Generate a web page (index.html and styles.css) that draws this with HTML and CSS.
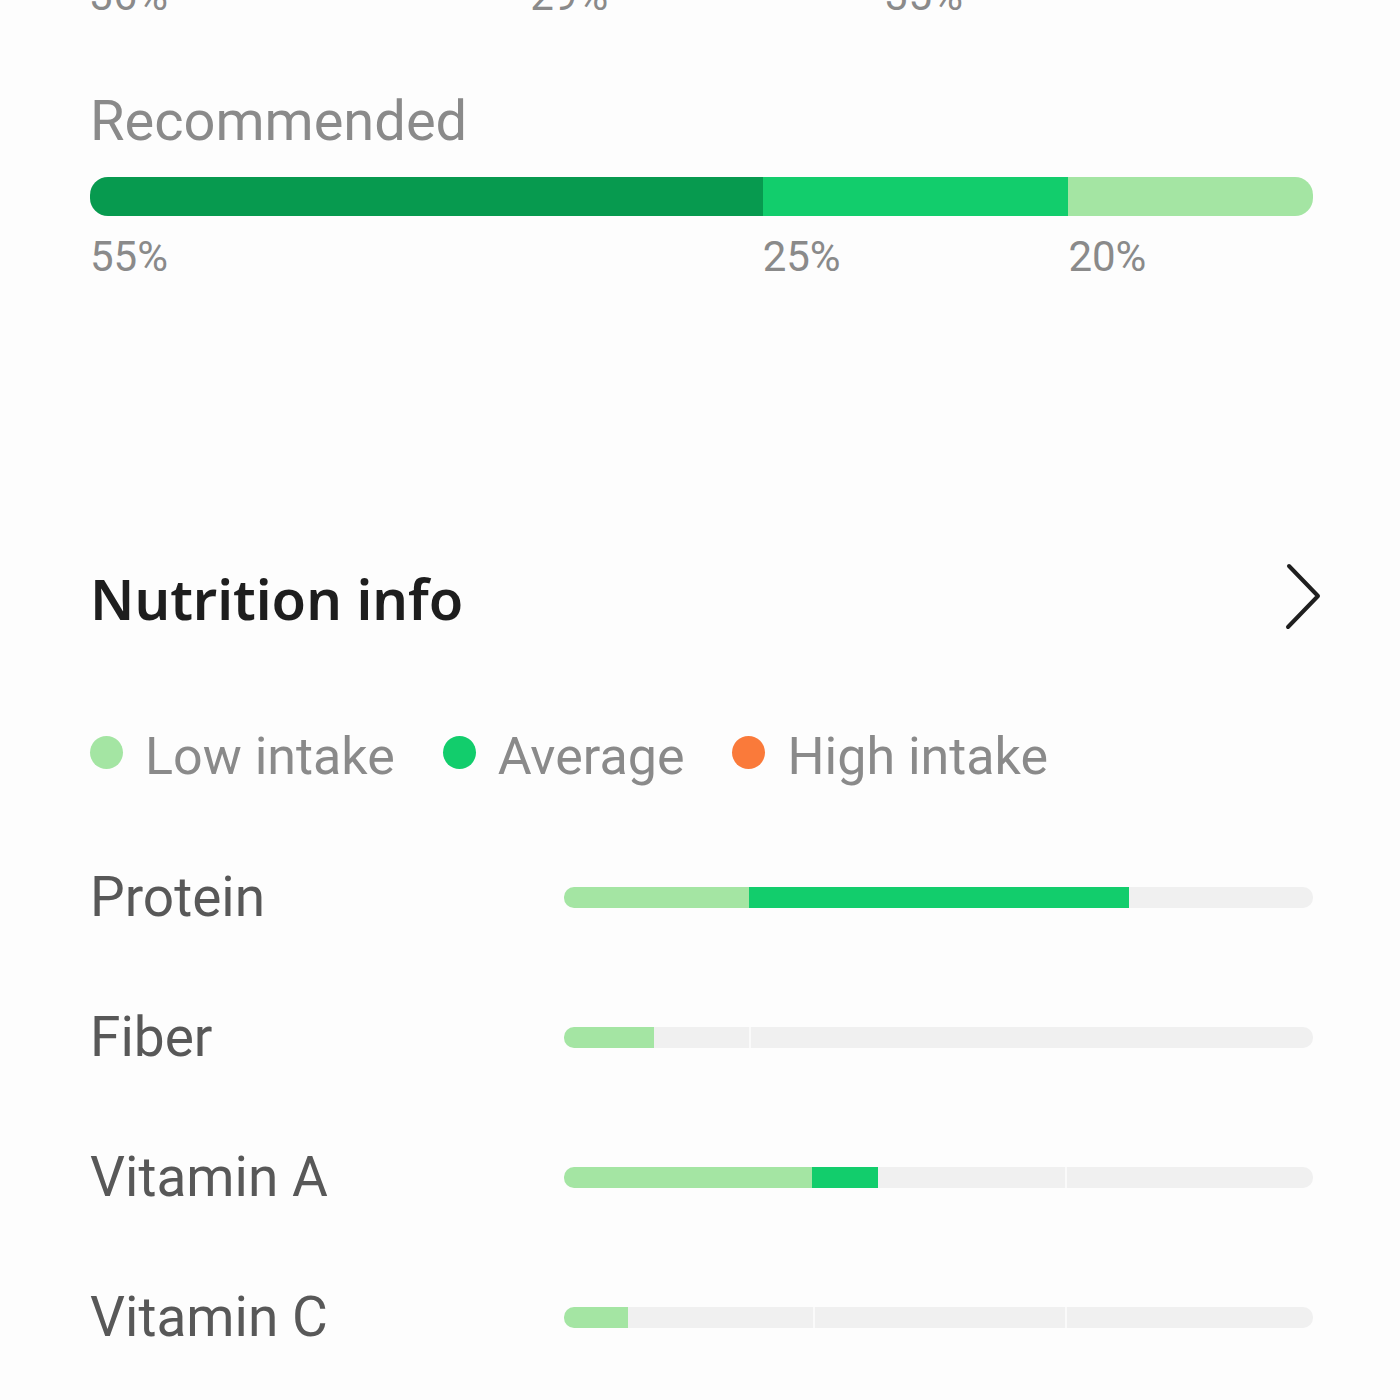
FILE: index.html
```html
<!DOCTYPE html>
<html lang="en">
<head>
    <meta charset="UTF-8">
    <meta name="viewport" content="width=device-width, initial-scale=1.0">
    <title>Nutrition</title>
    <link rel="stylesheet" href="styles.css">
</head>
<body>
    <div class="page">
        <!-- current split, bar scrolled out of view -->
        <div class="split-labels split-labels-top">
            <span style="width: 36%">36%</span>
            <span style="width: 29%">29%</span>
            <span style="width: 35%">35%</span>
        </div>

        <div class="split-title">Recommended</div>
        <div class="split-bar">
            <div class="seg seg-dark" style="width: 55%"></div>
            <div class="seg seg-mid" style="width: 25%"></div>
            <div class="seg seg-light" style="width: 20%"></div>
        </div>
        <div class="split-labels">
            <span style="width: 55%">55%</span>
            <span style="width: 25%">25%</span>
            <span style="width: 20%">20%</span>
        </div>

        <div class="section-header">
            <h2>Nutrition info</h2>
            <svg class="chevron" width="45" height="75" viewBox="0 0 45 75">
                <polyline points="9,6 38,36 8,67" fill="none" stroke="#1f1f1f" stroke-width="4" stroke-linecap="round" stroke-linejoin="round"/>
            </svg>
        </div>

        <div class="legend">
            <div class="legend-item"><span class="dot dot-low"></span>Low intake</div>
            <div class="legend-item"><span class="dot dot-avg"></span>Average</div>
            <div class="legend-item"><span class="dot dot-high"></span>High intake</div>
        </div>

        <div class="nutrients">
            <div class="nutrient">
                <div class="nutrient-name">Protein</div>
                <div class="track">
                    <div class="part part-low" style="width: 185px"></div>
                    <div class="part part-avg" style="width: 380px"></div>
                    <div class="part part-empty part-rest"></div>
                </div>
            </div>
            <div class="nutrient">
                <div class="nutrient-name">Fiber</div>
                <div class="track">
                    <div class="part part-low" style="width: 90px"></div>
                    <div class="part part-empty" style="width: 95px"></div>
                    <div class="part part-empty part-split part-rest"></div>
                </div>
            </div>
            <div class="nutrient">
                <div class="nutrient-name">Vitamin A</div>
                <div class="track">
                    <div class="part part-low" style="width: 248px"></div>
                    <div class="part part-avg" style="width: 66px"></div>
                    <div class="part part-empty" style="width: 187px"></div>
                    <div class="part part-empty part-split part-rest"></div>
                </div>
            </div>
            <div class="nutrient">
                <div class="nutrient-name">Vitamin C</div>
                <div class="track">
                    <div class="part part-low" style="width: 64px"></div>
                    <div class="part part-empty" style="width: 185px"></div>
                    <div class="part part-empty part-split" style="width: 252px"></div>
                    <div class="part part-empty part-split part-rest"></div>
                </div>
            </div>
        </div>
    </div>
</body>
</html>
```

FILE: styles.css
```css
* {
    margin: 0;
    padding: 0;
    box-sizing: border-box;
}

body {
    font-family: Roboto, 'Liberation Sans', sans-serif;
    background: #fdfdfd;
    overflow: hidden;
}

.page {
    width: 1400px;
    height: 1400px;
    padding: 0 87px 0 90px;
}

.split-labels {
    display: flex;
    margin-top: 20px;
    font-size: 42px;
    line-height: 1;
    color: #8a8a8a;
}

.split-labels span {
    display: block;
}

.split-labels-top {
    margin-top: -25px;
}

.split-title {
    margin-top: 76px;
    font-size: 56px;
    line-height: 1;
    color: #8a8a8a;
}

.split-bar {
    display: flex;
    height: 39px;
    margin-top: 28px;
    border-radius: 18px;
    overflow: hidden;
}

.seg {
    height: 100%;
}

.seg-dark {
    background: #079a4f;
}

.seg-mid {
    background: #12cd6c;
}

.seg-light {
    background: #a4e5a3;
}

.section-header {
    display: flex;
    align-items: center;
    justify-content: space-between;
    margin-top: 282px;
}

.section-header h2 {
    font-family: 'Noto Sans', 'Open Sans', sans-serif;
    font-size: 56px;
    font-weight: 600;
    line-height: 1;
    color: #1e1e1e;
}

.chevron {
    display: block;
    margin-right: -12px;
}

.legend {
    display: flex;
    align-items: center;
    gap: 48px;
    margin-top: 96px;
    font-size: 52px;
    line-height: 1;
    color: #8a8a8a;
}

.legend-item {
    display: flex;
    align-items: center;
}

.dot {
    width: 33px;
    height: 33px;
    border-radius: 50%;
    margin: 0 22px 9px 0;
}

.dot-low {
    background: #a4e5a3;
}

.dot-avg {
    background: #12cd6c;
}

.dot-high {
    background: #fa7a3a;
}

.nutrients {
    margin-top: 44px;
}

.nutrient {
    display: flex;
    align-items: center;
    height: 140px;
}

.nutrient-name {
    width: 474px;
    font-size: 55px;
    line-height: 1;
    color: #585858;
}

.track {
    flex: 1;
    display: flex;
    height: 21px;
    border-radius: 10px;
    overflow: hidden;
}

.part {
    height: 100%;
}

.part-low {
    background: #a4e5a3;
}

.part-avg {
    background: #12cd6c;
}

.part-empty {
    background: #f0f0f0;
}

.part-split {
    border-left: 2px solid #fafafa;
}

.part-rest {
    flex: 1;
}
```
